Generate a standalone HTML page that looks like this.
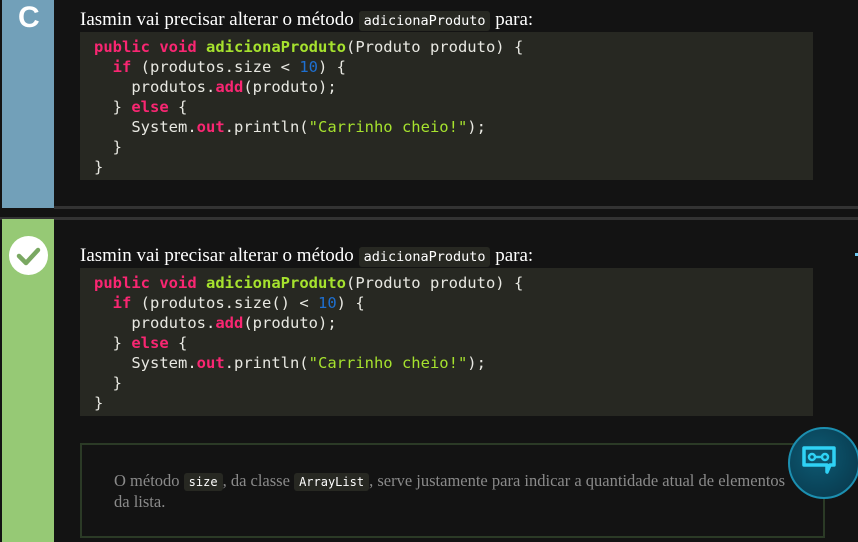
<!DOCTYPE html>
<html><head><meta charset="utf-8"><style>
body{margin:0;width:858px;height:542px;background:#131313;overflow:hidden;position:relative;font-family:"Liberation Serif",serif;}
.abs{position:absolute}
.code{position:absolute;left:80px;width:733px;background:#272822;font-family:"DejaVu Sans Mono","Liberation Mono",monospace;font-size:15.5px;line-height:20px;color:#e8e8e2;white-space:pre;padding:5px 0 0 14px;box-sizing:border-box}
.k{color:#f92672;font-weight:bold}.f{color:#a6e22e;font-weight:bold}.n{color:#1e6fd0}.s{color:#a6e22e}
.t{position:absolute;left:80px;color:#fff;font-size:19px;white-space:nowrap}
.ic{font-family:"DejaVu Sans Mono",monospace;font-size:13.5px;background:#272822;padding:2px 5px;border-radius:3px;color:#fff}
</style></head><body>
<div class="abs" style="left:2px;top:0;width:52px;height:208px;background:#72a0b9"></div>
<div class="abs" style="left:18px;top:1px;color:#fff;font:bold 30px 'Liberation Sans',sans-serif">C</div>
<div class="abs" style="left:54px;top:206px;width:804px;height:3px;background:#333"></div>
<div class="abs" style="left:0;top:217px;width:858px;height:3px;background:#333"></div>
<div class="abs" style="left:2px;top:219px;width:52px;height:323px;background:#96c975"></div>
<div class="abs" style="left:9px;top:236px;width:39px;height:39px;border-radius:50%;background:#fff">
<svg width="39" height="39" viewBox="0 0 39 39"><path d="M10 20 L17 27 L29 14" fill="none" stroke="#7aa862" stroke-width="4.5" stroke-linecap="round" stroke-linejoin="round"/></svg></div>
<div class="t" style="top:9px">Iasmin vai precisar alterar o método <span class="ic">adicionaProduto</span> para:</div>
<div class="code" style="top:32px;height:148px"><span class="k">public void</span> <span class="f">adicionaProduto</span>(Produto produto) {
  <span class="k">if</span> (produtos.size &lt; <span class="n">10</span>) {
    produtos.<span class="k">add</span>(produto);
  } <span class="k">else</span> {
    System.<span class="k">out</span>.println(<span class="s">"Carrinho cheio!"</span>);
  }
}</div>
<div class="t" style="top:245px">Iasmin vai precisar alterar o método <span class="ic">adicionaProduto</span> para:</div>
<div class="code" style="top:268px;height:148px"><span class="k">public void</span> <span class="f">adicionaProduto</span>(Produto produto) {
  <span class="k">if</span> (produtos.size() &lt; <span class="n">10</span>) {
    produtos.<span class="k">add</span>(produto);
  } <span class="k">else</span> {
    System.<span class="k">out</span>.println(<span class="s">"Carrinho cheio!"</span>);
  }
}</div>
<div class="abs" style="left:80px;top:443px;width:745px;height:95px;border:2px solid #2b3a26;box-sizing:border-box"></div>
<div class="abs" style="left:114px;top:471px;width:690px;color:#8a8a8a;font-size:16.5px;line-height:20px">O método <span class="ic" style="color:#fff;font-size:12px">size</span>, da classe <span class="ic" style="color:#fff;font-size:12px">ArrayList</span>, serve justamente para indicar a quantidade atual de elementos da lista.</div>
<div class="abs" style="left:788px;top:427px;width:72px;height:72px;border-radius:50%;background:radial-gradient(circle at 40% 40%,#0d5a73,#083447);border:2px solid #1c8fb0;box-sizing:border-box">
<svg width="72" height="72" viewBox="0 0 72 72"><path d="M14 19 h30 v17 h-4 l-3 7 v-7 h-23 z" fill="none" stroke="#2fd2f5" stroke-width="3.5" stroke-linejoin="round"/><circle cx="22" cy="28" r="3" fill="none" stroke="#2fd2f5" stroke-width="2.5"/><circle cx="35" cy="28" r="3" fill="none" stroke="#2fd2f5" stroke-width="2.5"/><path d="M25 28h7" stroke="#2fd2f5" stroke-width="2.5"/></svg></div>
<div class="abs" style="left:855px;top:253px;width:3px;height:3px;background:#6cc8f0"></div>
</body></html>
